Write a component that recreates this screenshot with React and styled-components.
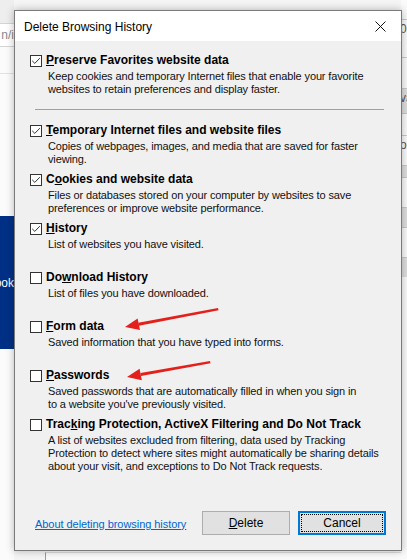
import styled, { createGlobalStyle } from 'styled-components';

const GlobalStyle = createGlobalStyle`
    html, body {
        margin: 0;
        padding: 0;
        background: #f2f2f2;
    }
    * {
        box-sizing: border-box;
    }
`

const items = [
    {
        key: 'temp',
        checked: true,
        title: <><u>T</u>emporary Internet files and website files</>,
        lines: ['Copies of webpages, images, and media that are saved for faster', 'viewing.'],
    },
    {
        key: 'cookies',
        checked: true,
        title: <>C<u>o</u>okies and website data</>,
        lines: ['Files or databases stored on your computer by websites to save', 'preferences or improve website performance.'],
    },
    {
        key: 'history',
        checked: true,
        title: <><u>H</u>istory</>,
        lines: ['List of websites you have visited.'],
    },
    {
        key: 'downloads',
        checked: false,
        title: <>Do<u>w</u>nload History</>,
        lines: ['List of files you have downloaded.'],
    },
    {
        key: 'forms',
        checked: false,
        title: <><u>F</u>orm data</>,
        lines: ['Saved information that you have typed into forms.'],
    },
    {
        key: 'passwords',
        checked: false,
        title: <><u>P</u>asswords</>,
        lines: ['Saved passwords that are automatically filled in when you sign in', "to a website you've previously visited."],
    },
    {
        key: 'tracking',
        checked: false,
        title: <>Trac<u>k</u>ing Protection, ActiveX Filtering and Do Not Track</>,
        lines: [
            'A list of websites excluded from filtering, data used by Tracking',
            'Protection to detect where sites might automatically be sharing details',
            'about your visit, and exceptions to Do Not Track requests.',
        ],
    },
]

const rightRows = [
    { h: 19, text: '' },
    { h: 38, text: '08', line: true },
    { h: 31, text: '', line: true },
    { h: 25, text: 'va', line: true, shade: true },
    { h: 22, text: '', line: true },
    { h: 30, text: 'or', line: true },
    { h: 12, text: '', line: true, shade: true },
    { h: 30, text: '', line: true },
    { h: 20, text: '', line: true, shade: true },
    { h: 30, text: '', line: true },
    { h: 20, text: '', line: true, shade: true },
]

const Check = ({ checked }) => (
    <Box>
        {checked && (
            <svg width="12" height="12" viewBox="0 0 12 12">
                <path d="M2.2 5.8 L4.8 8.4 L9.8 3.2" fill="none" stroke="#333" strokeWidth="1" />
            </svg>
        )}
    </Box>
)

const Option = ({ checked, title, lines, fixed = true }) => (
    <Item $fixed={fixed}>
        <TitleRow>
            <Check checked={checked} />
            <Title>{title}</Title>
        </TitleRow>
        <Desc>
            {lines.map((l) => <DescLine key={l}>{l}</DescLine>)}
        </Desc>
    </Item>
)

const App = () => {
    return (
        <>
            <GlobalStyle />
            <Page>
                <Backdrop>
                    <LeftPane>
                        <TopStrip />
                        <AddressBar>n/i</AddressBar>
                        <PaneBlock $h={27} $line />
                        <PaneBlock $h={142} />
                        <BlueBand>ook</BlueBand>
                        <PaneBlock $h={211} />
                    </LeftPane>
                    <Middle>
                        <BottomPanel />
                    </Middle>
                    <RightPane>
                        {rightRows.map((r, i) => (
                            <RightRow key={i} $h={r.h} $line={r.line} $shade={r.shade}>{r.text}</RightRow>
                        ))}
                    </RightPane>
                </Backdrop>

                <Dialog>
                    <TitleBar>
                        <DialogTitle>Delete Browsing History</DialogTitle>
                        <CloseButton>
                            <svg width="11" height="11" viewBox="0 0 11 11">
                                <path d="M0.5 0.5 L10.5 10.5 M10.5 0.5 L0.5 10.5" stroke="#111" strokeWidth="1" />
                            </svg>
                        </CloseButton>
                    </TitleBar>
                    <Body>
                        <Option
                            checked
                            fixed={false}
                            title={<><u>P</u>reserve Favorites website data</>}
                            lines={[
                                'Keep cookies and temporary Internet files that enable your favorite',
                                'websites to retain preferences and display faster.',
                            ]}
                        />
                        <Separator />
                        {items.map((it) => (
                            <Option key={it.key} checked={it.checked} title={it.title} lines={it.lines} />
                        ))}
                        <Footer>
                            <HelpLink href="#">About deleting browsing history</HelpLink>
                            <Buttons>
                                <Button><u>D</u>elete</Button>
                                <Button $focused>Cancel</Button>
                            </Buttons>
                        </Footer>
                    </Body>
                </Dialog>

                <Arrows width="407" height="560" viewBox="0 0 407 560">
                    <polygon points="218,308 218.6,310.2 138.9,325.8 138.2,322.8" fill="#e3201b" />
                    <polygon points="125,327 137.6,318.6 140,330" fill="#e3201b" />
                    <polygon points="210,361 210.6,363.2 141,376 140.4,373" fill="#e3201b" />
                    <polygon points="127,377 139.6,368.8 141.8,380.2" fill="#e3201b" />
                </Arrows>
            </Page>
        </>
    )
}

export default App;


const Page = styled.div`
    position: relative;
    width: 407px;
    height: 560px;
    overflow: hidden;
    font-family: "Liberation Sans", Arial, sans-serif;
    color: #000;
`

const Backdrop = styled.div`
    display: grid;
    grid-template-columns: 14px 1fr 6px;
    height: 100%;
`

const LeftPane = styled.div`
    display: flex;
    flex-direction: column;
    background: #fbfbfb;
    overflow: hidden;
`

const TopStrip = styled.div`
    height: 23px;
    background: #eeeeee;
`

const AddressBar = styled.div`
    height: 24px;
    background: #fff;
    border-top: 1px solid #d4d4d4;
    border-bottom: 1px solid #d4d4d4;
    color: #8a8a8a;
    font-size: 12px;
    line-height: 22px;
    white-space: nowrap;
    direction: rtl;
`

const PaneBlock = styled.div`
    height: ${p => p.$h}px;
    flex-shrink: 0;
    border-bottom: ${p => p.$line ? '1px solid #e2e2e2' : 'none'};
`

const BlueBand = styled.div`
    height: 133px;
    flex-shrink: 0;
    background: #003086;
    color: #fff;
    font-size: 12px;
    display: flex;
    align-items: center;
    justify-content: flex-end;
    white-space: nowrap;
`

const Middle = styled.div`
    display: flex;
    flex-direction: column;
    justify-content: flex-end;
    background: #f5f5f5;
`

const BottomPanel = styled.div`
    height: 8px;
    margin-left: 31px;
    background: #fafafa;
    border-left: 1px solid #9a9a9a;
    border-top: 1px solid #dcdcdc;
`

const RightPane = styled.div`
    display: flex;
    flex-direction: column;
    background: #fafafa;
    overflow: hidden;
`

const RightRow = styled.div`
    height: ${p => p.$h}px;
    flex-shrink: 0;
    border-top: ${p => p.$line ? '1px solid #c8c8c8' : 'none'};
    background: ${p => p.$shade ? '#dedede' : 'transparent'};
    color: #555;
    font-size: 12px;
    line-height: 14px;
    padding-top: 2px;
    white-space: nowrap;
    text-indent: -1px;
`

const Dialog = styled.div`
    position: absolute;
    left: 14px;
    top: 10px;
    width: 388px;
    height: 541px;
    display: flex;
    flex-direction: column;
    background: #f0f0f0;
    border: 1px solid #7a7a7a;
    box-shadow: 0 0 8px rgba(0, 0, 0, 0.28);
`

const TitleBar = styled.div`
    height: 30px;
    flex-shrink: 0;
    display: flex;
    align-items: center;
    justify-content: space-between;
    background: #fff;
    padding: 0 9px 0 9px;
`

const DialogTitle = styled.span`
    font-size: 12px;
    padding-top: 1px;
`

const CloseButton = styled.span`
    display: flex;
    align-items: center;
    justify-content: center;
    width: 22px;
    height: 22px;
    margin-right: 1px;
`

const Body = styled.div`
    flex: 1;
    display: flex;
    flex-direction: column;
    padding: 12px 15px 15px 15px;
`

const Item = styled.div`
    height: ${p => p.$fixed ? '49px' : 'auto'};
    flex-shrink: 0;
`

const TitleRow = styled.div`
    display: flex;
    align-items: flex-start;
    gap: 4px;
`

const Box = styled.span`
    width: 12px;
    height: 12px;
    margin-top: 2px;
    flex-shrink: 0;
    background: #fff;
    border: 1px solid #333;
    display: flex;
    align-items: center;
    justify-content: center;

    svg {
        margin: -1px;
    }
`

const Title = styled.span`
    font-size: 12px;
    font-weight: bold;
    line-height: 14px;
    white-space: nowrap;

    u {
        text-underline-offset: 1px;
    }
`

const Desc = styled.div`
    margin-top: 3px;
    padding-left: 18px;
`

const DescLine = styled.div`
    font-size: 11px;
    line-height: 13px;
    letter-spacing: -0.13px;
    white-space: nowrap;
    color: #111;
`

const Separator = styled.div`
    height: 1px;
    flex-shrink: 0;
    background: #a0a0a0;
    margin: 13px 0 13px 5px;
    width: 349px;
`

const Footer = styled.div`
    margin-top: auto;
    display: flex;
    align-items: center;
    justify-content: space-between;
    padding-left: 5px;
`

const HelpLink = styled.a`
    font-size: 11px;
    color: #0066cc;
    text-decoration: underline;
    letter-spacing: -0.05px;
    padding-top: 1px;
`

const Buttons = styled.div`
    display: flex;
    gap: 8px;
`

const Button = styled.button`
    width: 88px;
    height: 24px;
    font-family: "Liberation Sans", Arial, sans-serif;
    font-size: 12px;
    color: #000;
    background: #e1e1e1;
    border: ${p => p.$focused ? '2px solid #0078d7' : '1px solid #adadad'};
    outline: ${p => p.$focused ? '1px dotted #000' : 'none'};
    outline-offset: ${p => p.$focused ? '-4px' : '0'};
    padding: 0;
`

const Arrows = styled.svg`
    position: absolute;
    left: 0;
    top: 0;
    pointer-events: none;
`
